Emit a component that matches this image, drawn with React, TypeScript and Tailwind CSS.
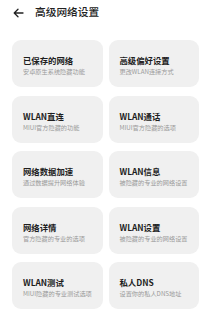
import React from 'react';

const items = [
  { title: '已保存的网络', sub: '安卓原生系统隐藏功能' },
  { title: '高级偏好设置', sub: '更改WLAN连接方式' },
  { title: 'WLAN直连', sub: 'MIUI官方隐藏的功能' },
  { title: 'WLAN通话', sub: 'MIUI官方隐藏的选项' },
  { title: '网络数据加速', sub: '通过数据提升网络体验' },
  { title: 'WLAN信息', sub: '被隐藏的专业的网络设置' },
  { title: '网络详情', sub: '官方隐藏的专业的选项' },
  { title: 'WLAN设置', sub: '被隐藏的专业的网络设置' },
  { title: 'WLAN测试', sub: 'MIUI隐藏的专业测试选项' },
  { title: '私人DNS', sub: '设置你的私人DNS地址' },
];

export default function App() {
  return (
    <div
      className="w-[208px] h-[315px] bg-white overflow-hidden"
      style={{ fontFamily: '"Noto Sans CJK SC", "Noto Sans", sans-serif' }}
    >
      {/* header */}
      <div className="flex items-center h-[24px] pl-[13px] pt-[1px]">
        <svg width="11" height="10" viewBox="0 0 11 10" fill="none" stroke="#222" strokeWidth="1.3" strokeLinecap="round" strokeLinejoin="round">
          <path d="M10 5H1.2M5 1.2L1.2 5L5 8.8" />
        </svg>
        <span className="ml-[11px] text-[10.7px] text-[#222] font-medium leading-none">高级网络设置</span>
      </div>

      {/* grid of cards */}
      <div className="grid grid-cols-2 gap-x-[6px] gap-y-[8.6px] pl-[12px] pr-[9px] pt-[16px]">
        {items.map(it => (
          <div
            key={it.title}
            className="h-[47px] rounded-[9px] bg-[#f0f0f0] flex flex-col justify-center pl-[11px] pt-[4px]"
          >
            <div className="text-[8.4px] font-bold text-[#1e1e1e] leading-[11px]">{it.title}</div>
            <div className="text-[6.2px] text-[#9a9a9a] leading-[9px] mt-[1px] whitespace-nowrap">{it.sub}</div>
          </div>
        ))}
      </div>
    </div>
  );
}
